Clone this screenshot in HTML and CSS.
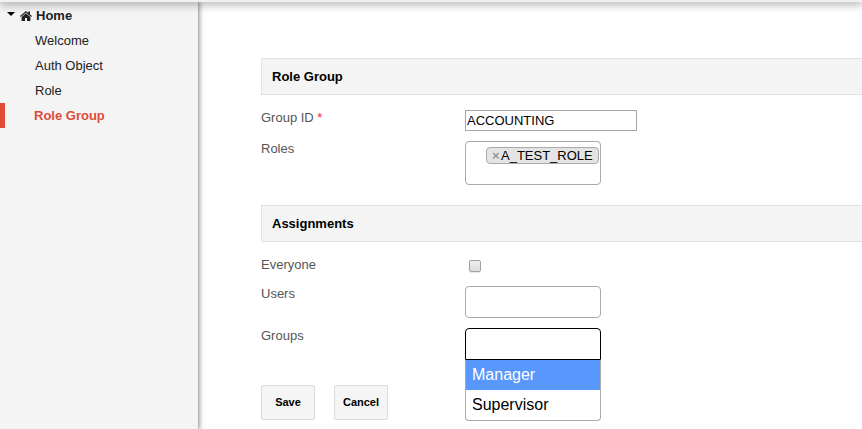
FILE: index.html
```html
<!DOCTYPE html>
<html lang="en">
<head>
<meta charset="utf-8">
<title>Role Group</title>
<link rel="stylesheet" href="styles.css">
</head>
<body>
<header class="topbar"></header>
<div class="layout">
  <nav class="sidebar">
    <div class="nav-root">
      <span class="caret"></span>
      <svg class="home" viewBox="0 0 12 10"><path d="M6 0 8.300 1.900V.5H10v2.900l2 1.700-.7.900L6 1.600.7 6 0 5.100z"/><path d="M6 2.200 10.400 5.900v4.100H7V7H5v3H1.600V5.900z"/></svg>
      <span>Home</span>
    </div>
    <a class="nav-item">Welcome</a>
    <a class="nav-item">Auth Object</a>
    <a class="nav-item">Role</a>
    <a class="nav-item active">Role Group</a>
  </nav>
  <main class="content">
    <h2 class="section-title">Role Group</h2>
    <div class="row row-input">
      <label>Group ID <span class="required">*</span></label>
      <input class="text-input" type="text" value="ACCOUNTING">
    </div>
    <div class="row row-roles">
      <label>Roles</label>
      <div class="select roles"><span class="chip"><span class="remove">×</span><span class="chip-text">A_TEST_ROLE</span></span></div>
    </div>
    <h2 class="section-title">Assignments</h2>
    <div class="row row-everyone">
      <label>Everyone</label>
      <span class="checkbox" role="checkbox" aria-checked="false"></span>
    </div>
    <div class="row row-users">
      <label>Users</label>
      <div class="select"></div>
    </div>
    <div class="row row-groups">
      <label>Groups</label>
      <div class="select open">
        <ul class="menu">
          <li class="highlighted">Manager</li>
          <li>Supervisor</li>
        </ul>
      </div>
    </div>
    <div class="buttons">
      <button class="button">Save</button>
      <button class="button">Cancel</button>
    </div>
  </main>
</div>
</body>
</html>
```
FILE: styles.css
```css
* { box-sizing: border-box; }
body {
  margin: 0;
  height: 429px;
  overflow: hidden;
  display: flex;
  flex-direction: column;
  background: #fff;
  color: #222;
  font: 13px/15px "Liberation Sans", Arial, sans-serif;
}
.topbar {
  position: relative;
  z-index: 2;
  height: 2px;
  flex: none;
  background: #f1f1f1;
  box-shadow: 0 0 10px 1px rgba(0, 0, 0, .6);
}
.layout { display: flex; flex: 1; min-height: 0; }
.sidebar {
  width: 198px;
  flex: none;
  padding-top: 1px;
  background: #f4f4f4;
  box-shadow: 0 0 5px 1px rgba(0, 0, 0, .5);
}
.nav-root {
  display: flex;
  align-items: center;
  height: 25px;
  padding-left: 7px;
  font-weight: bold;
}
.caret {
  border: 4px solid transparent;
  border-top-color: #000;
  border-bottom: 0;
  margin-top: -3px;
}
.home { width: 12px; height: 10px; margin: 0 4px 0 5px; fill: #222; }
.nav-item { display: block; height: 25px; line-height: 25px; padding-left: 35px; }
.nav-item.active {
  padding-left: 29px;
  border-left: 5px solid #dd4b39;
  color: #dd4b39;
  font-weight: bold;
}
.content { flex: 1; padding: 56px 0 0 63px; }
.section-title {
  margin: 0;
  height: 37px;
  padding-left: 10px;
  border: 1px solid #e2e2e2;
  border-right: 0;
  background: #f4f4f4;
  color: #000;
  font-size: 13px;
  line-height: 35px;
}
.row {
  display: grid;
  grid-template-columns: 204px 1fr;
  align-items: start;
  color: #555;
}
.row-input { height: 46px; padding-top: 15px; }
.row-roles { height: 64px; }
.row-everyone { height: 44px; padding-top: 15px; }
.row-users { height: 42px; }
.row-groups { height: 57px; }
.required { color: #f22; }
.text-input {
  width: 172px;
  height: 21px;
  padding: 0 1px;
  border: 1px solid #a6a6a6;
  border-radius: 0;
  outline: 0;
  color: #000;
  font: 13px "Liberation Sans", Arial, sans-serif;
}
.select {
  width: 136px;
  height: 32px;
  border: 1px solid #aaa;
  border-radius: 4px;
  background: #fff;
}
.roles { display: flex; align-items: flex-start; justify-content: flex-end; height: 44px; padding: 5px 1px; }
.chip {
  display: flex;
  width: 113px;
  height: 17px;
  padding-left: 5px;
  border: 1px solid #aaa;
  border-radius: 4px;
  background: #e4e4e4;
  color: #000;
  font-size: 13px;
  line-height: 15px;
}
.remove { width: 9px; color: #999; font-weight: bold; }
.checkbox {
  width: 12px;
  height: 12px;
  margin: 3px 0 0 4px;
  border: 1px solid #a3a3a3;
  border-radius: 2px;
  background: linear-gradient(#eee, #dcdcdc);
  box-shadow: 0 1px 1px rgba(0, 0, 0, .1);
}
.open {
  position: relative;
  border-color: #000;
  border-radius: 4px 4px 0 0;
}
.menu {
  position: absolute;
  top: 31px;
  left: -1px;
  width: 136px;
  margin: 0;
  padding: 0;
  list-style: none;
  border: 1px solid #aaa;
  border-top: 0;
  border-radius: 0 0 4px 4px;
  background: #fff;
  color: #000;
  font-size: 16px;
}
.menu li { height: 30px; padding-left: 6px; line-height: 30px; }
.menu .highlighted { background: #5897fb; color: #fff; }
.buttons { display: flex; gap: 19px; }
.button {
  width: 54px;
  height: 35px;
  padding: 0 0 2px;
  border: 1px solid #dcdcdc;
  border-radius: 2px;
  background: #f5f5f5;
  color: #000;
  font: bold 11px "Liberation Sans", Arial, sans-serif;
}
```
